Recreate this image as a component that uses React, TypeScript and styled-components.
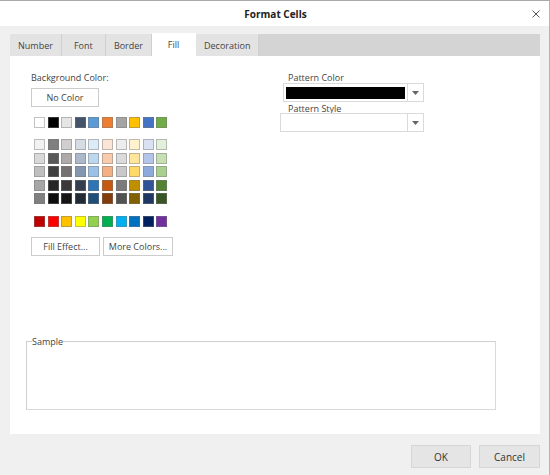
import React from "react";
import styled, { createGlobalStyle } from "styled-components";

const GlobalStyle = createGlobalStyle`
  html, body {
    margin: 0;
    padding: 0;
    background: #f0f0f0;
  }
  body {
    font-family: "Open Sans", "Noto Sans", "DejaVu Sans", sans-serif;
    font-size: 9px;
    color: #444;
  }
`;

const THEME_ROW = ["#ffffff", "#000000", "#e7e6e6", "#44546a", "#5b9bd5", "#ed7d31", "#a5a5a5", "#ffc000", "#4472c4", "#70ad47"];

const SHADE_ROWS = [
  ["#f2f2f2", "#7f7f7f", "#d0cece", "#d6dce4", "#ddebf7", "#fce4d6", "#ededed", "#fff2cc", "#d9e1f2", "#e2efda"],
  ["#d9d9d9", "#595959", "#aeaaaa", "#acb9ca", "#bdd7ee", "#f8cbad", "#dbdbdb", "#ffe699", "#b4c6e7", "#c6e0b4"],
  ["#bfbfbf", "#404040", "#757171", "#8497b0", "#9bc2e6", "#f4b084", "#c9c9c9", "#ffd966", "#8ea9db", "#a9d08e"],
  ["#a6a6a6", "#262626", "#3a3838", "#333f4f", "#2f75b5", "#c65911", "#7b7b7b", "#bf8f00", "#305496", "#548235"],
  ["#808080", "#0d0d0d", "#161616", "#222b35", "#1f4e78", "#833c0c", "#525252", "#806000", "#203764", "#375623"]
];

const STANDARD_ROW = ["#c00000", "#ff0000", "#ffc000", "#ffff00", "#92d050", "#00b050", "#00b0f0", "#0070c0", "#002060", "#7030a0"];

const TABS = ["Number", "Font", "Border", "Fill", "Decoration"];

const Window = styled.div`
  width: 550px;
  height: 475px;
  box-sizing: border-box;
  border-top: 1px solid #a9a9a9;
  border-right: 1px solid #b4b4b4;
  display: flex;
  flex-direction: column;
  background: #f0f0f0;
`;

const TitleBar = styled.div`
  height: 25px;
  flex: none;
  background: #fff;
  display: flex;
  align-items: center;
  justify-content: center;
  position: relative;
`;

const Title = styled.div`
  font-size: 10px;
  font-weight: 700;
  color: #222;
  margin-left: 2px;
`;

const CloseButton = styled.div`
  position: absolute;
  right: 9px;
  top: 9px;
  width: 8px;
  height: 8px;
  display: flex;
`;

const Body = styled.div`
  flex: 1;
  display: flex;
  flex-direction: column;
  padding: 8px 9px 0 10px;
  min-height: 0;
`;

const TabStrip = styled.div`
  height: 22px;
  flex: none;
  display: flex;
  align-items: flex-end;
  background: #d4d4d4;
`;

const Tab = styled.div<{ $active?: boolean }>`
  height: ${(p) => (p.$active ? "23px" : "22px")};
  min-width: 44px;
  box-sizing: border-box;
  padding: 0 8px;
  display: flex;
  align-items: center;
  justify-content: center;
  background: ${(p) => (p.$active ? "#fff" : "#e3e3e3")};
  border-right: 1px solid ${(p) => (p.$active ? "#fff" : "#d0d0d0")};
  color: #444;
  font-size: 9px;
`;

const Panel = styled.div`
  flex: 1;
  background: #fff;
  display: flex;
  flex-direction: column;
  padding: 15px 0 24px 16px;
`;

const TopRow = styled.div`
  display: flex;
`;

const LeftColumn = styled.div`
  width: 249px;
  margin-left: 5px;
  display: flex;
  flex-direction: column;
  align-items: flex-start;
`;

const RightColumn = styled.div`
  width: 144px;
  display: flex;
  flex-direction: column;
`;

const Label = styled.div<{ $indent?: number }>`
  line-height: 12px;
  height: 12px;
  padding-top: 1px;
  margin-bottom: -1px;
  padding-left: ${(p) => p.$indent ?? 0}px;
  color: #444;
  white-space: nowrap;
`;

const PlainButton = styled.div<{ $width: number }>`
  width: ${(p) => p.$width}px;
  height: 19px;
  box-sizing: border-box;
  border: 1px solid #cccccc;
  background: #fff;
  display: flex;
  align-items: center;
  justify-content: center;
  color: #444;
`;

const NoColorButton = styled(PlainButton)`
  margin-top: 5px;
`;

const SwatchGrid = styled.div<{ $top: number }>`
  margin-top: ${(p) => p.$top}px;
  margin-left: 3px;
  display: grid;
  grid-template-columns: repeat(10, 11px);
  column-gap: 2.6px;
  row-gap: 2.5px;
`;

const Swatch = styled.div<{ $color: string }>`
  width: 11px;
  height: 11px;
  box-sizing: border-box;
  background: ${(p) => p.$color};
  border: 1px solid rgba(120, 120, 120, 0.45);
`;

const ButtonRow = styled.div`
  margin-top: 10px;
  display: flex;
  gap: 3px;
`;

const Combo = styled.div<{ $width: number; $shift: number }>`
  width: ${(p) => p.$width}px;
  height: 19px;
  margin-left: ${(p) => p.$shift}px;
  box-sizing: border-box;
  border: 1px solid #dadada;
  background: #fff;
  display: flex;
`;

const ComboValue = styled.div<{ $fill?: string }>`
  flex: 1;
  padding: 3px 2px 2px 2px;
  display: flex;
  &::before {
    content: "";
    flex: 1;
    background: ${(p) => p.$fill ?? "transparent"};
  }
`;

const ComboArrow = styled.div`
  width: 15px;
  border-left: 1px solid #dadada;
  display: flex;
  align-items: center;
  justify-content: center;
`;

const StyleCombo = styled(Combo)`
  margin-top: -1px;
`;

const SampleGroup = styled.fieldset`
  margin: auto 0 0 0;
  width: 470px;
  height: 74px;
  box-sizing: border-box;
  padding: 0;
  border: 1px solid #cfcfcf;
  border-right-color: #d9d9d9;
  border-bottom-color: #d9d9d9;
`;

const SampleLegend = styled.legend`
  margin-left: 5px;
  padding: 0;
  line-height: 11px;
  color: #444;
`;

const Footer = styled.div`
  height: 41px;
  flex: none;
  display: flex;
  justify-content: flex-end;
  align-items: flex-start;
  padding-top: 11px;
  box-sizing: border-box;
  gap: 8px;
`;

const DialogButton = styled.div<{ $width: number }>`
  width: ${(p) => p.$width}px;
  height: 23px;
  box-sizing: border-box;
  background: #e5e5e5;
  border: 1px solid #d6d6d6;
  display: flex;
  align-items: center;
  justify-content: center;
  font-size: 10px;
  color: #333;
`;

const Arrow = () => (
  <svg width="7" height="4" viewBox="0 0 7 4">
    <path d="M0 0 L7 0 L3.5 4 Z" fill="#666" />
  </svg>
);

const CloseIcon = () => (
  <svg width="8" height="8" viewBox="0 0 8 8">
    <path d="M0.5 0.5 L7.5 7.5 M7.5 0.5 L0.5 7.5" stroke="#555" strokeWidth="1" fill="none" />
  </svg>
);

const Swatches = ({ rows, top }: { rows: string[][]; top: number }) => (
  <SwatchGrid $top={top}>
    {rows.flat().map((c, i) => (
      <Swatch key={i} $color={c} />
    ))}
  </SwatchGrid>
);

export default function App() {
  return (
    <>
      <GlobalStyle />
      <Window>
        <TitleBar>
          <Title>Format Cells</Title>
          <CloseButton>
            <CloseIcon />
          </CloseButton>
        </TitleBar>
        <Body>
          <TabStrip>
            {TABS.map((t) => (
              <Tab key={t} $active={t === "Fill"}>
                {t}
              </Tab>
            ))}
          </TabStrip>
          <Panel>
            <TopRow>
              <LeftColumn>
                <Label>Background Color:</Label>
                <NoColorButton $width={68}>No Color</NoColorButton>
                <Swatches rows={[THEME_ROW]} top={10} />
                <Swatches rows={SHADE_ROWS} top={11} />
                <Swatches rows={[STANDARD_ROW]} top={12} />
                <ButtonRow>
                  <PlainButton $width={69}>Fill Effect...</PlainButton>
                  <PlainButton $width={70}>More Colors...</PlainButton>
                </ButtonRow>
              </LeftColumn>
              <RightColumn>
                <Label $indent={8}>Pattern Color</Label>
                <Combo $width={141} $shift={3}>
                  <ComboValue $fill="#000" />
                  <ComboArrow>
                    <Arrow />
                  </ComboArrow>
                </Combo>
                <Label $indent={8}>Pattern Style</Label>
                <StyleCombo $width={144} $shift={0}>
                  <ComboValue />
                  <ComboArrow>
                    <Arrow />
                  </ComboArrow>
                </StyleCombo>
              </RightColumn>
            </TopRow>
            <SampleGroup>
              <SampleLegend>Sample</SampleLegend>
            </SampleGroup>
          </Panel>
          <Footer>
            <DialogButton $width={60}>OK</DialogButton>
            <DialogButton $width={61}>Cancel</DialogButton>
          </Footer>
        </Body>
      </Window>
    </>
  );
}
